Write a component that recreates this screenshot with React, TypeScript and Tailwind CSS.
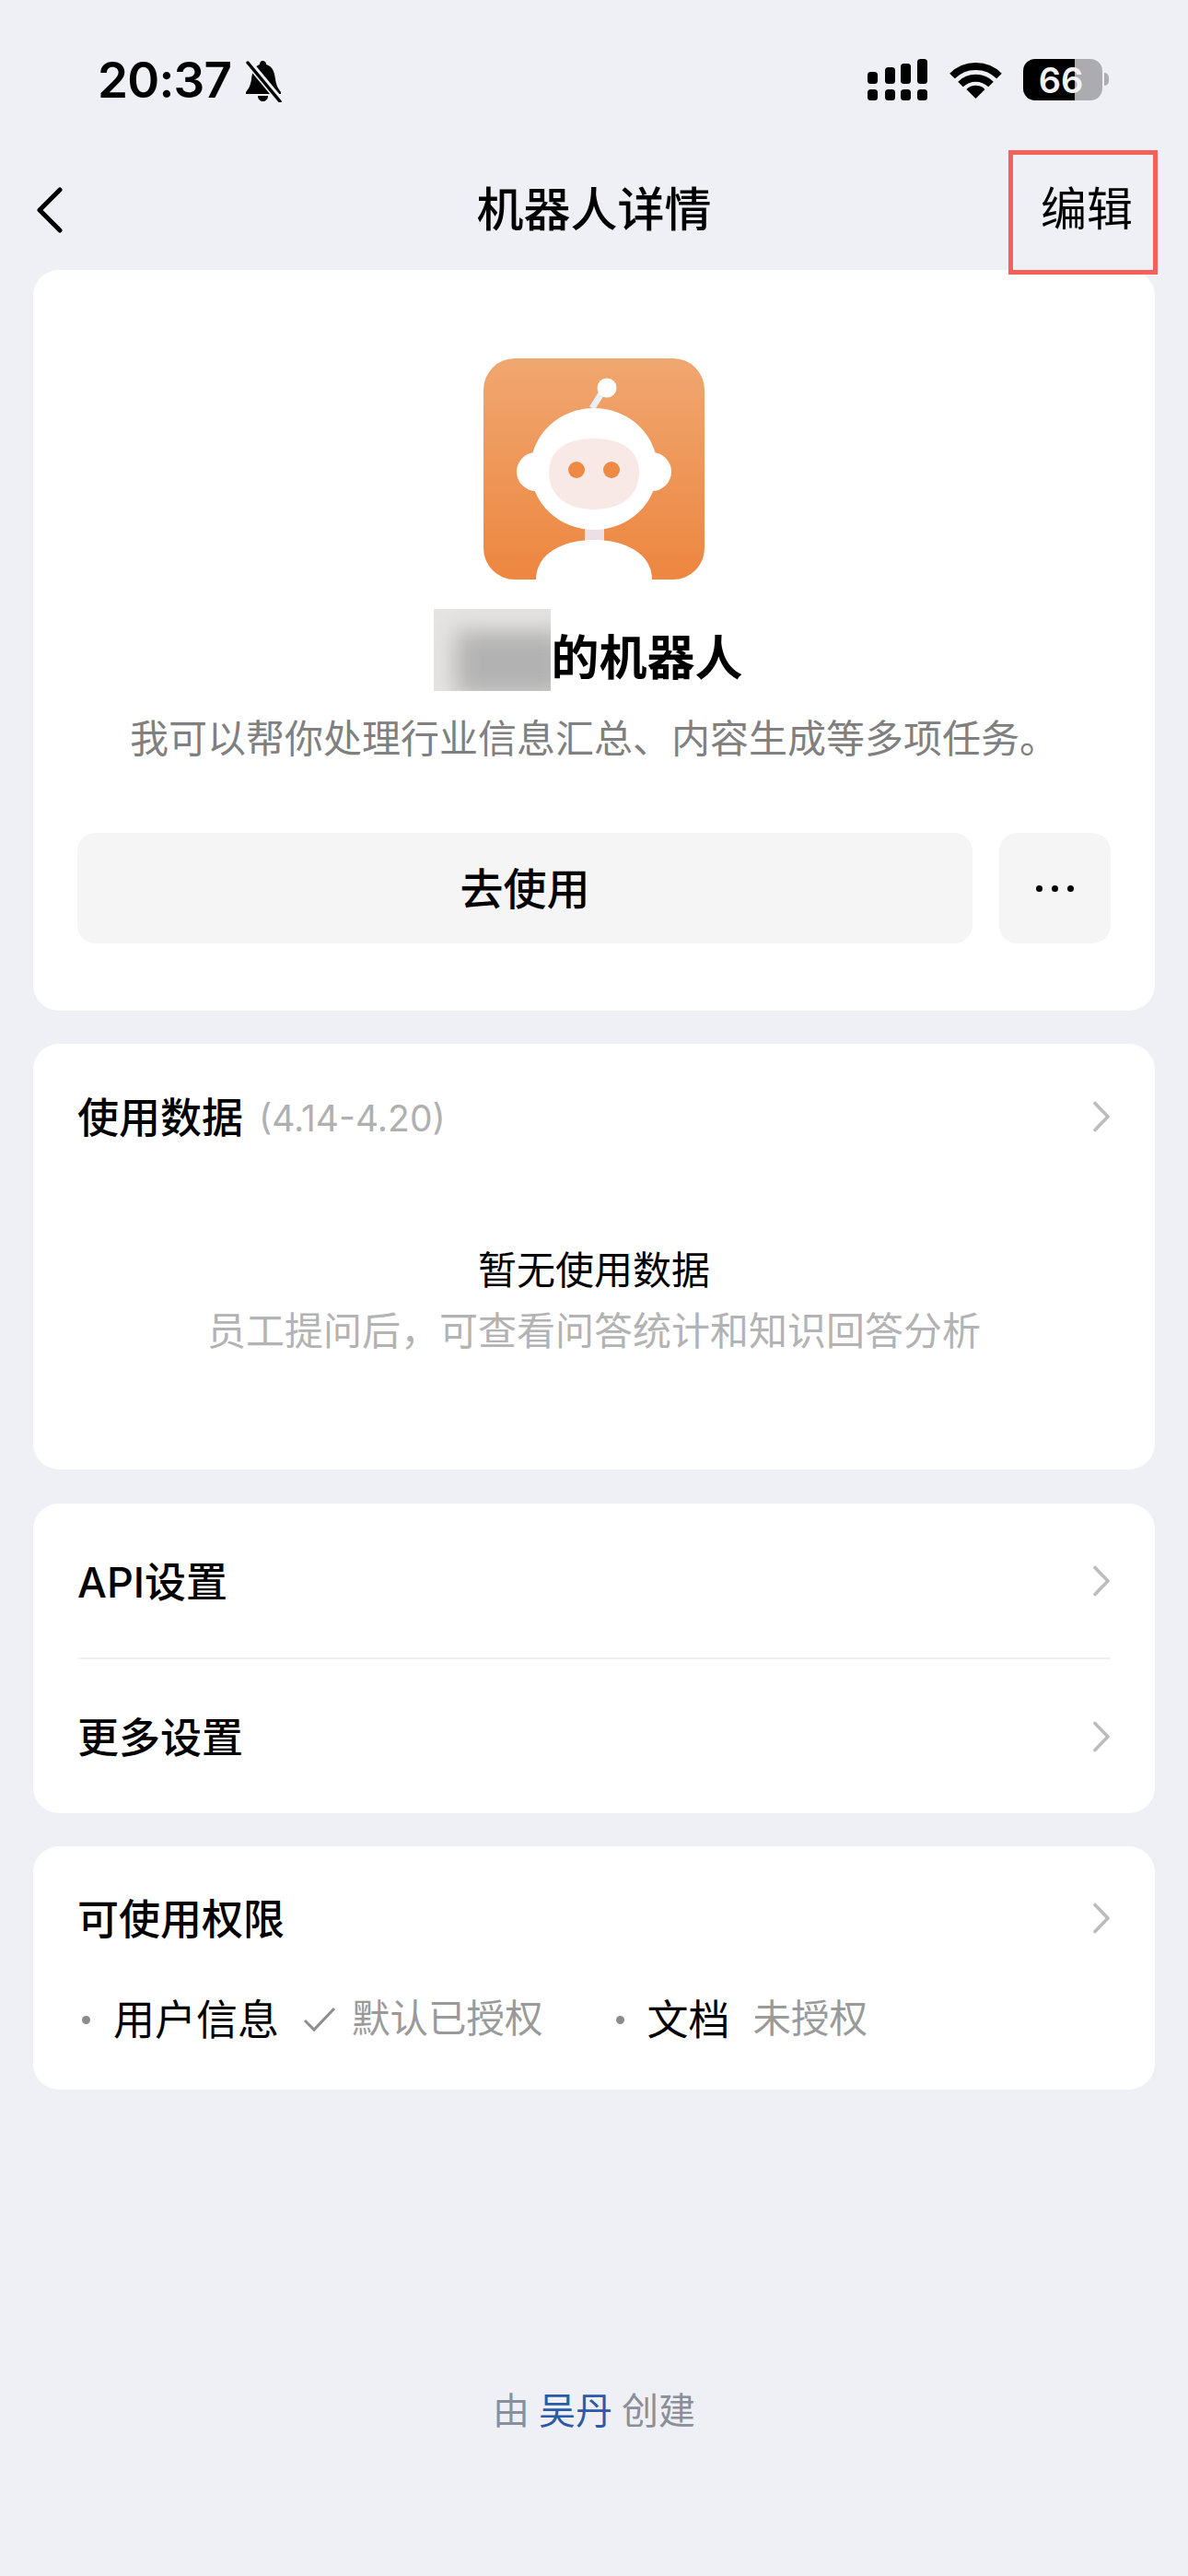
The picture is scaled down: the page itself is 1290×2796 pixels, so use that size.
const cjk = "font-['Inter','Noto_Sans_CJK_SC',sans-serif]";

function Chevron() {
  return (
    <svg width="20" height="34" viewBox="0 0 20 34" fill="none" className="mb-[3px] shrink-0">
      <path d="M3 2.5 L17 17 L3 31.5" stroke="#bcbcbc" strokeWidth="3.6" strokeLinecap="round" strokeLinejoin="round" />
    </svg>
  );
}

function StatusBar() {
  return (
    <div className="flex h-[163px] items-start justify-between pt-[63px] pl-[106px] pr-[86px]">
      <div className="flex items-center gap-[13px]">
        <span className="font-['Inter',sans-serif] text-[53px] leading-[45px] font-semibold tracking-[-0.8px] text-black">20:37</span>
        <svg width="44" height="46" viewBox="0 0 44 46" className="mt-[2px]">
          <path d="M21 1 C24 1 25 3 25 5 C32 7 34 13 35 21 C36 28 38 31 41 35 L41 37 L3 37 L3 35 C6 31 8 28 9 21 C10 13 12 7 18 5 C18 3 19 1 21 1 Z" fill="#000" />
          <path d="M16 39 L27 39 C27 43 24 45 21.500 45 C19 45 16 43 16 39 Z" fill="#000" />
          <path d="M5 2 L40 44" stroke="#eff0f5" strokeWidth="8" />
          <path d="M5 3 L40 45" stroke="#000" strokeWidth="3.500" strokeLinecap="round" />
        </svg>
      </div>
      <div className="mt-[1px] flex items-start">
        <svg width="66" height="45" viewBox="0 0 66 45" fill="#000">
          <rect x="0" y="14" width="11" height="13" rx="3.500" />
          <rect x="19" y="9" width="11" height="18" rx="3.500" />
          <rect x="36" y="5" width="11" height="22" rx="3.500" />
          <rect x="54" y="0" width="11" height="27" rx="3.500" />
          <rect x="0" y="33" width="11" height="12" rx="3.500" />
          <rect x="19" y="33" width="11" height="12" rx="3.500" />
          <rect x="36" y="33" width="11" height="12" rx="3.500" />
          <rect x="54" y="33" width="11" height="12" rx="3.500" />
        </svg>
        <svg width="57" height="41" viewBox="0 0 57 41" fill="none" className="mt-[2px] ml-[23px]">
          <path d="M3 16.500 A36 36 0 0 1 54 16.500" stroke="#000" strokeWidth="8" />
          <path d="M12 25.500 A23.500 23.500 0 0 1 45 25.500" stroke="#000" strokeWidth="8" />
          <path d="M18.500 31 A14 14 0 0 1 38.500 31 L28.500 41 Z" fill="#000" />
        </svg>
        <div className="ml-[23px] flex h-[45px] w-[86px] items-center justify-center rounded-[13px] bg-[linear-gradient(to_right,#000_65%,#acacb0_65%)] pr-[4px] font-['Inter',sans-serif] text-[38px] leading-none font-semibold text-[#f2f2f5]">
          66
        </div>
        <div className="mt-[15px] ml-[2px] h-[14px] w-[5px] rounded-r-full bg-[#acacb0]" />
      </div>
    </div>
  );
}

function NavBar() {
  return (
    <div className="relative flex h-[130px] items-center justify-center pb-[2px]">
      <svg width="30" height="50" viewBox="0 0 30 50" fill="none" className="absolute top-[40px] left-[39px]">
        <path d="M26 3 L4 25 L26 47" stroke="#000" strokeWidth="5" strokeLinecap="round" strokeLinejoin="round" />
      </svg>
      <span className="text-[51px] leading-none font-medium text-black">机器人详情</span>
      <div className="absolute top-0 left-[1095px] z-10 flex h-[135px] w-[162px] items-center justify-center border-[5px] border-[#f4605a] pl-[8px] pb-[8px] text-[50px] leading-none text-black">
        编辑
      </div>
    </div>
  );
}

function RobotLogo() {
  return (
    <svg width="240" height="240" viewBox="0 0 240 240" className="rounded-[34px]">
      <defs>
        <linearGradient id="logoBg" x1="0" y1="0" x2="0" y2="1">
          <stop offset="0" stopColor="#f0a770" />
          <stop offset="1" stopColor="#ed8640" />
        </linearGradient>
      </defs>
      <rect width="240" height="240" fill="url(#logoBg)" />
      <path d="M118 54 L133 30" stroke="#e9f0f4" strokeWidth="7" />
      <circle cx="134" cy="32" r="10.500" fill="#fff" />
      <rect x="110" y="180" width="21" height="22" fill="#ecdfe6" />
      <ellipse cx="57" cy="123" rx="21" ry="21" fill="#fff" />
      <ellipse cx="183" cy="123" rx="21" ry="21" fill="#fff" />
      <ellipse cx="120" cy="120" rx="69" ry="66" fill="#fff" />
      <path d="M71 124 C71 98 92 87 120 87 C148 87 169 98 169 124 C169 150 148 164 120 164 C92 164 71 150 71 124 Z" fill="#f8e9e7" />
      <circle cx="101" cy="121" r="9" fill="#ee8a44" />
      <circle cx="139" cy="121" r="9" fill="#ee8a44" />
      <path d="M57 240 C57 212 86 197 120 197 C154 197 183 212 183 240 Z" fill="#fff" />
    </svg>
  );
}

function BlurBox() {
  return (
    <div className="relative h-[89px] w-[127px] overflow-hidden bg-[#e6e4e2]">
      <div className="absolute top-[24px] left-[24px] h-[70px] w-[120px] bg-[#b2b2b2] blur-[12px]" />
    </div>
  );
}

function ProfileCard() {
  return (
    <section className="flex h-[804px] flex-col items-center rounded-[28px] bg-white pt-[96px]">
      <RobotLogo />
      <div className="mt-[32px] flex h-[89px] items-start pr-[12px]">
        <BlurBox />
        <span className="mt-[28px] text-[52px] leading-[52px] font-semibold text-black">的机器人</span>
      </div>
      <p className="mt-[27px] text-[42px] leading-[50px] text-[#808080]">我可以帮你处理行业信息汇总、内容生成等多项任务。</p>
      <div className="mt-[77px] flex w-full gap-[29px] px-[48px]">
        <div className="flex h-[120px] w-[972px] items-center justify-center rounded-[20px] bg-[#f5f5f6] text-[47px] leading-none font-medium text-black">
          去使用
        </div>
        <div className="flex h-[120px] w-[121px] items-center justify-center gap-[10px] rounded-[20px] bg-[#f5f5f6]">
          <span className="h-[7px] w-[7px] rounded-full bg-black" />
          <span className="h-[7px] w-[7px] rounded-full bg-black" />
          <span className="h-[7px] w-[7px] rounded-full bg-black" />
        </div>
      </div>
    </section>
  );
}

function UsageCard() {
  return (
    <section className="mt-[36px] flex h-[462px] flex-col rounded-[28px] bg-white px-[48px]">
      <div className="mt-[56px] flex h-[48px] items-center justify-between">
        <div className="flex items-center gap-[17px]">
          <span className="text-[45px] leading-none font-medium text-black">使用数据</span>
          <span className="text-[39px] leading-none text-[#b0b0b0]">(4.14-4.20)</span>
        </div>
        <Chevron />
      </div>
      <p className="mt-[117px] text-center text-[42px] leading-[50px] text-black">暂无使用数据</p>
      <p className="mt-[16px] text-center text-[42px] leading-[50px] text-[#b3b3b3]">员工提问后，可查看问答统计和知识回答分析</p>
    </section>
  );
}

function SettingsCard() {
  return (
    <section className="mt-[37px] flex h-[336px] flex-col rounded-[28px] bg-white px-[48px]">
      <div className="flex h-[169px] items-center justify-between border-b-2 border-[#f1f1f1] pt-[3px]">
        <span className="text-[45px] leading-none font-medium text-black">API设置</span>
        <Chevron />
      </div>
      <div className="flex h-[167px] items-center justify-between pt-[3px]">
        <span className="text-[45px] leading-none font-medium text-black">更多设置</span>
        <Chevron />
      </div>
    </section>
  );
}

function PermissionCard() {
  return (
    <section className="mt-[36px] flex h-[264px] flex-col rounded-[28px] bg-white px-[48px]">
      <div className="mt-[55px] flex h-[48px] items-center justify-between">
        <span className="text-[45px] leading-none font-medium text-black">可使用权限</span>
        <Chevron />
      </div>
      <div className="mt-[61px] flex h-[48px] items-center">
        <span className="ml-[5px] h-[9px] w-[9px] rounded-full bg-[#8c8c8c]" />
        <span className="ml-[25px] text-[45px] leading-none text-black">用户信息</span>
        <svg width="36" height="28" viewBox="0 0 36 28" fill="none" className="ml-[26px]">
          <path d="M2 15 L12 25 L34 2" stroke="#8e8e8e" strokeWidth="3" />
        </svg>
        <span className="ml-[17px] text-[41.500px] leading-none text-[#9a9a9a]">默认已授权</span>
        <span className="ml-[79px] h-[9px] w-[9px] rounded-full bg-[#8c8c8c]" />
        <span className="ml-[25px] text-[45px] leading-none text-black">文档</span>
        <span className="ml-[25px] text-[41.500px] leading-none text-[#9a9a9a]">未授权</span>
      </div>
    </section>
  );
}

export default function App() {
  return (
    <div className={`${cjk} h-[2796px] w-[1290px] overflow-hidden bg-[#eff0f5]`}>
      <StatusBar />
      <NavBar />
      <main className="px-[36px]">
        <ProfileCard />
        <UsageCard />
        <SettingsCard />
        <PermissionCard />
      </main>
      <p className="mt-[324px] text-center text-[40px] leading-[50px] text-[#8a8f99]">
        由<span className="mx-[10px] text-[#2b5aa8]">吴丹</span>创建
      </p>
    </div>
  );
}
